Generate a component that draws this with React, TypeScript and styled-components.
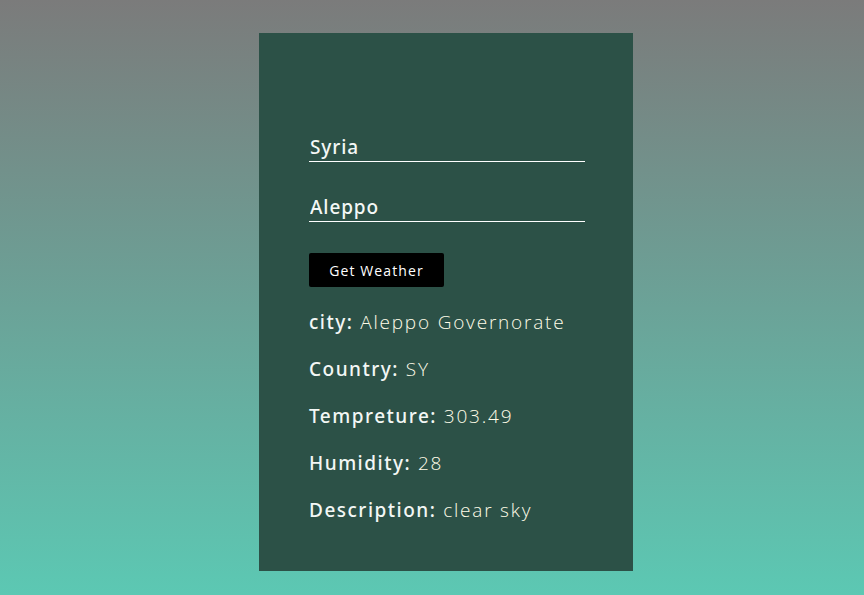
import React from "react";
import styled, { createGlobalStyle } from "styled-components";

const GlobalStyle = createGlobalStyle`
  html, body { margin: 0; padding: 0; }
  body {
    min-height: 100vh;
    background: linear-gradient(to bottom, #7b7b7b 0%, #5cc8b3 100%);
    font-family: "Open Sans", "Noto Sans", sans-serif;
  }
`;

const Page = styled.div`
  display: flex;
  justify-content: center;
  padding: 33px 0 24px 28px;
  min-height: 100vh;
  box-sizing: border-box;
`;

const Card = styled.div`
  width: 374px;
  height: 538px;
  box-sizing: border-box;
  background: #2c5147;
  padding: 101px 48px 0 50px;
  display: flex;
  flex-direction: column;
`;

const Field = styled.input<{ $gap: number }>`
  width: 276px;
  box-sizing: border-box;
  background: transparent;
  border: none;
  border-bottom: 1px solid #ffffff;
  outline: none;
  color: #f4f8f6;
  font-family: "Noto Sans", "Open Sans", sans-serif;
  font-size: 19px;
  font-weight: 500;
  letter-spacing: 0.9px;
  padding: 0 0 1px 1px;
  height: 28px;
  margin-bottom: ${(p) => p.$gap}px;
`;

const Button = styled.button`
  width: 135px;
  height: 34px;
  background: #000;
  color: #fff;
  border: none;
  border-radius: 2px;
  font-family: "Open Sans", sans-serif;
  font-size: 14px;
  letter-spacing: 1.1px;
  margin-bottom: 17px;
  cursor: pointer;
`;

const Row = styled.p`
  margin: 0;
  height: 47px;
  line-height: 36px;
  font-size: 19px;
  letter-spacing: 1.8px;
  color: #f2f4ef;
  white-space: nowrap;
`;

const Label = styled.span`
  font-family: "Noto Sans", "Open Sans", sans-serif;
  font-weight: 500;
  letter-spacing: 1.5px;
  color: #f3f7f5;
`;

const Value = styled.span`
  font-weight: 300;
  color: #fffce8;
`;

const rows: [string, string][] = [
  ["city", "Aleppo Governorate"],
  ["Country", "SY"],
  ["Tempreture", "303.49"],
  ["Humidity", "28"],
  ["Description", "clear sky"],
];

export default function App() {
  return (
    <>
      <GlobalStyle />
      <Page>
        <Card>
          <Field $gap={32} defaultValue="Syria" />
          <Field $gap={31} defaultValue="Aleppo" />
          <Button>Get Weather</Button>
          {rows.map(([k, v]) => (
            <Row key={k}>
              <Label>{k}:</Label> <Value>{v}</Value>
            </Row>
          ))}
        </Card>
      </Page>
    </>
  );
}
